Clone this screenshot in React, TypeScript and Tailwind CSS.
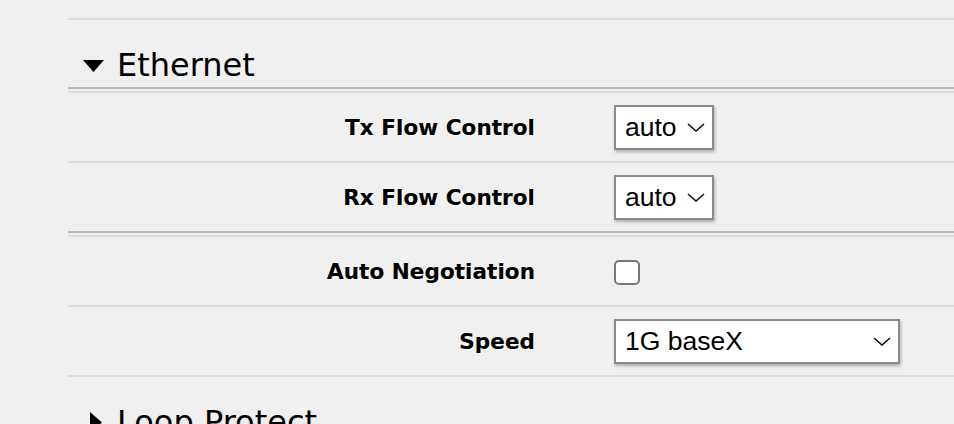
import React from "react";

const Chevron = () => (
  <svg width="18" height="9" viewBox="0 0 18 9" className="shrink-0">
    <polyline points="1,1 9,8 17,1" fill="none" stroke="#111" strokeWidth="1.6" />
  </svg>
);

const Label = ({ children }: { children: React.ReactNode }) => (
  <div className="w-[467px] mt-[2px] text-right font-bold text-[21.6px] text-black [text-shadow:0_0_2px_#fff,1px_1px_1px_#fff,0_0_0.4px_#000]">
    {children}
  </div>
);

const Select = ({ value, width }: { value: string; width: string }) => (
  <div
    className={`${width} h-[45px] bg-white border-2 border-[#8a8a8a] shadow-[1px_2px_3px_rgba(0,0,0,0.28)] flex items-center pl-[9px] pr-[7px] justify-between`}
    style={{ fontFamily: '"Liberation Sans", Arial, sans-serif' }}
  >
    <span className="text-[26.5px] text-black leading-none">{value}</span>
    <Chevron />
  </div>
);

const Row = ({
  label,
  children,
  border,
}: {
  label: string;
  children: React.ReactNode;
  border: string;
}) => (
  <div className={`h-[70px] flex items-center border-b-2 ${border}`}>
    <Label>{label}</Label>
    <div className="ml-[79px] flex items-center">{children}</div>
  </div>
);

export default function App() {
  return (
    <div
      className="h-[424px] overflow-hidden bg-[#f0f0f0] pl-[68px]"
      style={{ fontFamily: '"DejaVu Sans", Verdana, sans-serif' }}
    >
      <div className="h-[18px]" />
      <div className="border-t-2 border-[#dddddd]">
        <div className="h-[69px] pt-[27px] flex items-start border-b-2 border-[#b9b9b9]">
          <div className="ml-[15px] w-[34px] h-[37px] flex items-center">
            <svg width="21" height="12" viewBox="0 0 21 12">
              <polygon points="0,0 21,0 10.5,12" fill="#000" />
            </svg>
          </div>
          <div className="text-[32px] leading-[37px] text-black">Ethernet</div>
        </div>
        <div className="h-[2px]" />
        <div className="border-t-2 border-[#dddddd]">
          <Row label="Tx Flow Control" border="border-[#dddddd]">
            <Select value="auto" width="w-[100px]" />
          </Row>
          <Row label="Rx Flow Control" border="border-[#b9b9b9]">
            <Select value="auto" width="w-[100px]" />
          </Row>
          <div className="h-[2px]" />
          <div className="border-t-2 border-[#dddddd]">
            <Row label="Auto Negotiation" border="border-[#dddddd]">
              <div className="w-[26px] h-[25px] mt-[3px] bg-white border-2 border-[#777777] rounded-[5px]" />
            </Row>
            <Row label="Speed" border="border-[#dddddd]">
              <Select value="1G baseX" width="w-[286px]" />
            </Row>
          </div>
        </div>
        <div className="h-[69px] pt-[27px] flex items-start">
          <div className="ml-[15px] w-[34px] h-[37px] flex items-center">
            <svg width="12" height="21" viewBox="0 0 12 21" className="ml-[7px]">
              <polygon points="0,0 12,10.5 0,21" fill="#000" />
            </svg>
          </div>
          <div className="text-[32px] leading-[37px] text-black">Loop Protect</div>
        </div>
      </div>
    </div>
  );
}
